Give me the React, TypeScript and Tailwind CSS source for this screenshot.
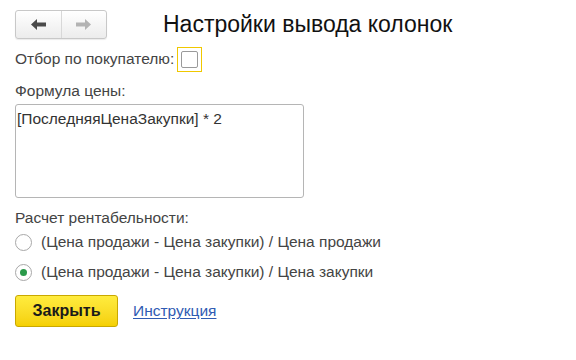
import { useState } from 'react';

function ArrowLeft({ color }: { color: string }) {
  return (
    <svg width="15" height="11" viewBox="0 0 15 11">
      <path d="M0 5.5 L6 0 L6 3.5 L15 3.5 L15 7.5 L6 7.5 L6 11 Z" fill={color} />
    </svg>
  );
}

function ArrowRight({ color }: { color: string }) {
  return (
    <svg width="15" height="11" viewBox="0 0 15 11">
      <path d="M15 5.5 L9 0 L9 3.5 L0 3.5 L0 7.5 L9 7.5 L9 11 Z" fill={color} />
    </svg>
  );
}

function Radio({ checked, label, onClick }: { checked: boolean; label: string; onClick: () => void }) {
  return (
    <div className="flex items-center gap-[9px] h-[30px] cursor-pointer" onClick={onClick}>
      <span className="w-[17px] h-[17px] rounded-full border border-[#a8a8a8] bg-white flex items-center justify-center">
        {checked && <span className="w-[7px] h-[7px] rounded-full bg-[#2a9a4a]" />}
      </span>
      <span>{label}</span>
    </div>
  );
}

export default function App() {
  const [checked, setChecked] = useState(false);
  const [mode, setMode] = useState(1);

  return (
    <div className="w-[576px] h-[360px] bg-white text-[#444] text-[15.5px] font-['Liberation_Sans',Arial,sans-serif] px-[15px] pt-[9px]">
      <div className="flex items-center h-[30px]">
        <div className="flex h-[29px] w-[92px] rounded-[3px] border border-[#c8c8c8] bg-gradient-to-b from-white to-[#ececec] shadow-[0_1px_1px_rgba(0,0,0,0.08)]">
          <button className="flex-1 flex items-center justify-center border-r border-[#d8d8d8]">
            <ArrowLeft color="#4a4a4a" />
          </button>
          <button className="flex-1 flex items-center justify-center">
            <ArrowRight color="#b3b3b3" />
          </button>
        </div>
        <h1 className="ml-[56px] text-[23px] text-[#111] leading-none">Настройки вывода колонок</h1>
      </div>

      <div className="flex items-center mt-[7px] h-[26px]">
        <span>Отбор по покупателю:</span>
        <span
          className="ml-[3px] w-[25px] h-[25px] border border-[#f0c800] flex items-center justify-center cursor-pointer"
          onClick={() => setChecked(!checked)}
        >
          <span className="w-[17px] h-[17px] border border-[#9a9a9a] rounded-[2px] bg-white" />
        </span>
      </div>

      <div className="mt-[10px] leading-[18px]">Формула цены:</div>
      <div className="mt-[4px] w-[289px] h-[94px] border border-[#b5b5b5] rounded-[3px] px-[1px] pt-[2px] text-[#333]">
        [ПоследняяЦенаЗакупки] * 2
      </div>

      <div className="mt-[11px] leading-[18px]">Расчет рентабельности:</div>
      <div className="mt-0">
        <Radio checked={mode === 0} label="(Цена продажи - Цена закупки) / Цена продажи" onClick={() => setMode(0)} />
        <Radio checked={mode === 1} label="(Цена продажи - Цена закупки) / Цена закупки" onClick={() => setMode(1)} />
      </div>

      <div className="flex items-center mt-[8px]">
        <button className="w-[103px] h-[32px] rounded-[3px] border border-[#c9a800] bg-gradient-to-b from-[#ffec3d] to-[#f5d000] text-[16px] font-bold text-[#1a1a1a]">
          Закрыть
        </button>
        <a href="#" className="ml-[15px] text-[#2f5bb3] underline underline-offset-2">
          Инструкция
        </a>
      </div>
    </div>
  );
}
